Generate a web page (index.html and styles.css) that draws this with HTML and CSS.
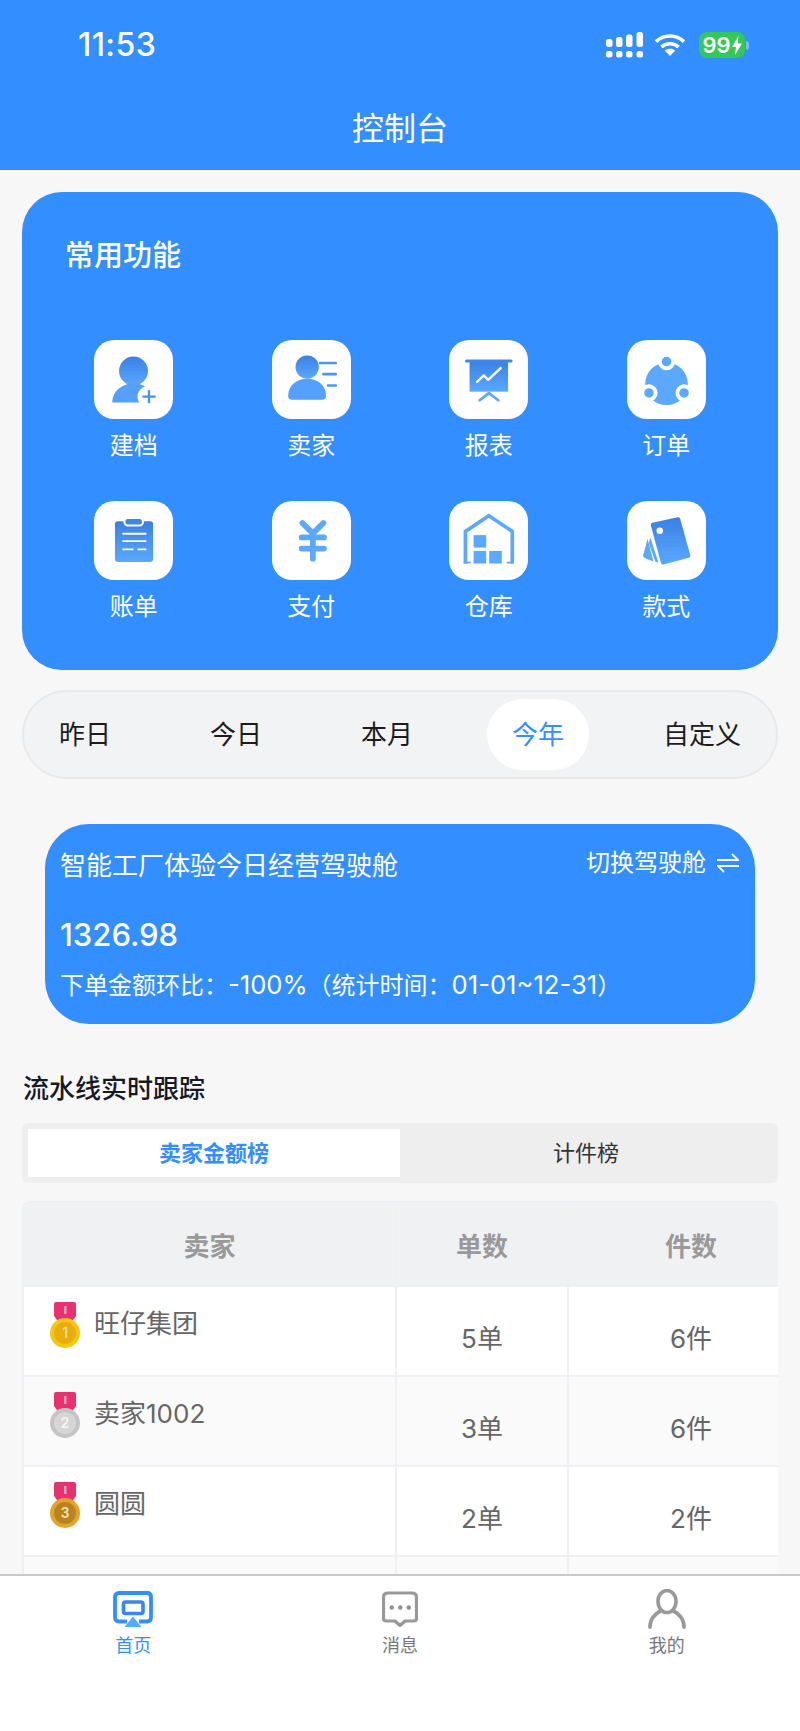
FILE: index.html
```html
<!DOCTYPE html>
<html lang="zh-CN">
<head>
<meta charset="utf-8">
<title>控制台</title>
<link rel="stylesheet" href="styles.css">
</head>
<body>
<svg class="defs" aria-hidden="true"><defs>
<linearGradient id="g" x1="0" y1="0" x2="0" y2="1"><stop offset="0" stop-color="#3a80e2"/><stop offset="1" stop-color="#5aa8ff"/></linearGradient>
</defs></svg>
<div class="app">
  <header class="top">
    <div class="status">
      <span class="time">11:53</span>
      <div class="status-icons">
        <svg class="signal" viewBox="0 0 37 26" width="37" height="26"><g fill="#fff"><rect x="0" y="7" width="6.5" height="8" rx="2.5"/><rect x="10" y="5" width="6.5" height="10" rx="2.5"/><rect x="20" y="2.5" width="6.5" height="12.5" rx="2.5"/><rect x="30.5" y="0" width="6.5" height="15" rx="2.5"/><rect x="0" y="19" width="6.5" height="6.5" rx="2.5"/><rect x="10" y="19" width="6.5" height="6.5" rx="2.5"/><rect x="20" y="19" width="6.5" height="6.5" rx="2.5"/><rect x="30.5" y="19" width="6.5" height="6.5" rx="2.5"/></g></svg>
        <svg class="wifi" viewBox="0 0 32 23" width="32" height="23"><g fill="none" stroke="#fff" stroke-width="3.6"><path d="M2 8.6C9.8 1.2 22.2 1.2 30 8.6"/><path d="M7.4 14C12 9.6 20 9.6 24.6 14"/></g><path d="M16 23l-5.2-5.4c2.9-2.6 7.5-2.6 10.4 0z" fill="#fff"/></svg>
        <div class="battery">
          <div class="batt-body"><span>99</span><svg viewBox="0 0 10 19" width="10" height="19"><path d="M6.4 0L0 11h4L3 19l7-11.6H5.8z" fill="#fff"/></svg></div>
          <i class="batt-nub"></i>
        </div>
      </div>
    </div>
    <h1 class="title">控制台</h1>
  </header>

  <main class="main">
    <section class="func-card">
      <h2 class="func-title">常用功能</h2>
      <div class="func-grid">
        <div class="func">
          <div class="tile"><svg viewBox="0 0 78 78" width="79" height="79">
            <circle cx="39" cy="30.7" r="14.3" fill="url(#g)"/>
            <path d="M18 61.7C18 51 27 43 39 43s21 8 21 18.700z" fill="#559fff"/>
            <circle cx="53.500" cy="56" r="10.500" fill="#fff"/>
            <path d="M54.300 49.500v13M47.800 56h13" stroke="#4490f4" stroke-width="2.200" fill="none"/>
          </svg></div>
          <span class="func-label">建档</span>
        </div>
        <div class="func">
          <div class="tile"><svg viewBox="0 0 78 78" width="79" height="79">
            <circle cx="34.700" cy="26.700" r="11.500" fill="url(#g)"/>
            <path d="M16 55C16 45 24 38.300 34.700 38.300S53.300 45 53.300 55q0 4-4 4H20q-4 0-4-4z" fill="#559fff"/>
            <path d="M47.300 22.700H63M50.700 33.700H63M55.300 45H63" stroke="#4a94f5" stroke-width="2.500" stroke-linecap="round" fill="none"/>
          </svg></div>
          <span class="func-label">卖家</span>
        </div>
        <div class="func">
          <div class="tile"><svg viewBox="0 0 78 78" width="79" height="79">
            <rect x="20.300" y="20.700" width="38" height="30.300" fill="url(#g)"/>
            <path d="M17.300 20.700h44" stroke="#3d86ea" stroke-width="3" stroke-linecap="round"/>
            <path d="M27.700 41.300L34.300 35l4.400 4.300L51 27.700" stroke="#fff" stroke-width="2.400" stroke-linecap="round" stroke-linejoin="round" fill="none"/>
            <path d="M39.300 52.500l-9 7M39.300 52.500l9.400 7" stroke="#5aa8ff" stroke-width="2.700" stroke-linecap="round" fill="none"/>
          </svg></div>
          <span class="func-label">报表</span>
        </div>
        <div class="func">
          <div class="tile"><svg viewBox="0 0 78 78" width="79" height="79">
            <circle cx="39" cy="43.300" r="21" fill="#5aa8ff"/>
            <g fill="#5aa8ff" stroke="#fff" stroke-width="3.800"><circle cx="39" cy="21.300" r="6.600"/><circle cx="21.700" cy="52.300" r="6.600"/><circle cx="56.300" cy="52.300" r="6.600"/></g>
          </svg></div>
          <span class="func-label">订单</span>
        </div>
        <div class="func">
          <div class="tile"><svg viewBox="0 0 78 78" width="79" height="79">
            <rect x="20.700" y="20" width="37.600" height="40.300" rx="3" fill="url(#g)"/>
            <rect x="30" y="16.700" width="18.300" height="7.600" rx="3.500" fill="#3d86ea" stroke="#fff" stroke-width="2"/>
            <path d="M28 32.300h23.700M28 39.700h23.700M28 47.700h11M43 47.700h8.700" stroke="#fff" stroke-width="1.800" fill="none"/>
          </svg></div>
          <span class="func-label">账单</span>
        </div>
        <div class="func">
          <div class="tile"><svg viewBox="0 0 78 78" width="79" height="79">
            <path d="M30 21.700l10.300 10.300L50.700 21.700M29.300 36h22M29.300 47h22M40.300 32v25" stroke="#5aa8ff" stroke-width="5.700" stroke-linecap="round" stroke-linejoin="round" fill="none"/>
          </svg></div>
          <span class="func-label">支付</span>
        </div>
        <div class="func">
          <div class="tile"><svg viewBox="0 0 78 78" width="79" height="79">
            <path d="M16.200 61.700V30L39.300 14.500 62.500 30V61.700" stroke="#5aa8ff" stroke-width="3.600" fill="none"/>
            <path d="M14.500 60.800h7M57 60.800h7" stroke="#5aa8ff" stroke-width="1.800"/>
            <g fill="#5aa8ff"><rect x="24.300" y="33.700" width="12.400" height="12.300"/><rect x="24.300" y="49.300" width="12.400" height="12.400"/><rect x="39.700" y="49.300" width="12.400" height="12.400"/></g>
          </svg></div>
          <span class="func-label">仓库</span>
        </div>
        <div class="func">
          <div class="tile"><svg viewBox="0 0 78 78" width="79" height="79">
            <path d="M20.300 37.300L16 53.500q-.500 2 1.500 2.800L26 59.800z" fill="#5aa8ff"/>
            <path d="M23 36l-1.500 5.500 6.500 18.500 3 .8z" fill="#5aa8ff"/>
            <path d="M25 21.500L50 16q2-.4 2.500 1.500l10 36q.5 2-1.500 2.500L36 62.600q-2 .4-2.500-1.500L23.500 24q-.5-2 1.500-2.500z" fill="url(#g)"/>
            <circle cx="32.300" cy="29.300" r="3.200" fill="#fff"/>
          </svg></div>
          <span class="func-label">款式</span>
        </div>
      </div>
    </section>

    <nav class="range">
      <span class="range-item">昨日</span>
      <span class="range-item">今日</span>
      <span class="range-item">本月</span>
      <span class="range-item range-on">今年</span>
      <span class="range-item">自定义</span>
    </nav>

    <section class="cockpit">
      <div class="cockpit-head">
        <span class="cockpit-name">智能工厂体验今日经营驾驶舱</span>
        <span class="cockpit-switch">切换驾驶舱
          <svg viewBox="0 0 22 20" width="22" height="20"><path d="M0 7h21l-6-6M22 13H1l6 6" stroke="#fff" stroke-width="1.800" fill="none"/></svg>
        </span>
      </div>
      <div class="cockpit-num">1326.98</div>
      <div class="cockpit-sub">下单金额环比：<span class="latin">-100%</span>（统计时间：<span class="latin">01-01~12-31</span>）</div>
    </section>

    <h3 class="sec-title">流水线实时跟踪</h3>
    <div class="tabs">
      <div class="tab tab-on">卖家金额榜</div>
      <div class="tab">计件榜</div>
    </div>

    <div class="table">
      <div class="tr thead">
        <div class="td">卖家</div><div class="td">单数</div><div class="td">件数</div>
      </div>
      <div class="tr">
        <div class="td td-name">
          <svg class="medal" viewBox="0 0 30 46" width="30" height="46"><path d="M4 2q0-2 2-2h18q2 0 2 2v12l-6 8H10L4 14z" fill="#e8316f"/><rect x="14" y="4" width="2.500" height="8" fill="#f7a0bd"/><circle cx="15" cy="31" r="15" fill="#f3c80f"/><circle cx="15" cy="31" r="11" fill="#e8ae10"/><text x="15" y="36" class="medal-num" fill="#f8dc80">1</text></svg>
          <span>旺仔集团</span>
        </div>
        <div class="td td-num">5单</div><div class="td td-num">6件</div>
      </div>
      <div class="tr tr-alt">
        <div class="td td-name">
          <svg class="medal" viewBox="0 0 30 46" width="30" height="46"><path d="M4 2q0-2 2-2h18q2 0 2 2v12l-6 8H10L4 14z" fill="#e8316f"/><rect x="14" y="4" width="2.500" height="8" fill="#f7a0bd"/><circle cx="15" cy="31" r="15" fill="#c4c4c4"/><circle cx="15" cy="31" r="11" fill="#d6d6d6"/><text x="15" y="36" class="medal-num" fill="#f4f4f4">2</text></svg>
          <span>卖家1002</span>
        </div>
        <div class="td td-num">3单</div><div class="td td-num">6件</div>
      </div>
      <div class="tr">
        <div class="td td-name">
          <svg class="medal" viewBox="0 0 30 46" width="30" height="46"><path d="M4 2q0-2 2-2h18q2 0 2 2v12l-6 8H10L4 14z" fill="#e8316f"/><rect x="14" y="4" width="2.500" height="8" fill="#f7a0bd"/><circle cx="15" cy="31" r="15" fill="#e2a52a"/><circle cx="15" cy="31" r="11" fill="#b98420"/><text x="15" y="36" class="medal-num" fill="#f0dcae">3</text></svg>
          <span>圆圆</span>
        </div>
        <div class="td td-num">2单</div><div class="td td-num">2件</div>
      </div>
      <div class="tr tr-alt">
        <div class="td"></div><div class="td"></div><div class="td"></div>
      </div>
    </div>
  </main>

  <footer class="tabbar">
    <div class="bar-item bar-on">
      <div class="bar-icon"><svg viewBox="0 0 40 36" width="40" height="36">
        <path d="M14 30.500H6q-4 0-4-4V6q0-4 4-4h28q4 0 4 4v20.500q0 4-4 4h-8" stroke="#338eff" stroke-width="3.800" fill="none"/>
        <rect x="10.500" y="11" width="19.500" height="11.500" rx="2" stroke="#3a86ec" stroke-width="3.600" fill="none"/>
        <path d="M20 25.500l8.500 10.500h-17z" fill="#5aa8ff"/>
      </svg></div>
      <span>首页</span>
    </div>
    <div class="bar-item">
      <div class="bar-icon"><svg viewBox="0 0 36 36" width="36" height="36">
        <path d="M6 2h24q4.500 0 4.500 4.500v21q0 2.500-3 2.500H23l-5 4.500-5-4.500H4.500q-3 0-3-2.500v-21Q1.500 2 6 2z" stroke="#999" stroke-width="3.200" stroke-linejoin="round" fill="none"/>
        <g fill="#8f8f8f"><circle cx="9.800" cy="16.500" r="2.200"/><circle cx="18.300" cy="16.500" r="2.200"/><circle cx="26.800" cy="16.500" r="2.200"/></g>
      </svg></div>
      <span>消息</span>
    </div>
    <div class="bar-item">
      <div class="bar-icon"><svg viewBox="0 0 40 40" width="40" height="40">
        <ellipse cx="20" cy="12.500" rx="9" ry="11" stroke="#999" stroke-width="3.600" fill="none"/>
        <path d="M3 38C3 30 8.500 24.500 13.500 22M37 38C37 30 31.500 24.500 26.500 22" stroke="#999" stroke-width="3.800" stroke-linecap="round" fill="none"/>
      </svg></div>
      <span>我的</span>
    </div>
  </footer>
</div>
</body>
</html>
```

FILE: styles.css
```css
* { box-sizing: border-box; }
html, body { margin: 0; padding: 0; }
body {
  width: 800px;
  height: 1731px;
  overflow: hidden;
  font-family: "Inter", "Noto Sans CJK SC", sans-serif;
  background: #f7f7f7;
  color: #222;
}
.defs { width: 0; height: 0; display: block; overflow: hidden; }
.app { display: flex; flex-direction: column; height: 1731px; }
svg { display: block; flex: none; }

/* header */
.top { height: 170px; flex: none; background: #338eff; color: #fff; }
.status {
  height: 90px;
  display: flex;
  align-items: center;
  justify-content: space-between;
  padding: 0 51px 0 78px;
}
.time { font-size: 32px; font-weight: 500; line-height: 1; letter-spacing: .4px; }
.status-icons { display: flex; align-items: center; }
.signal { margin-right: 11px; margin-top: -1px; }
.wifi { margin-right: 13px; margin-top: -1px; }
.battery { display: flex; align-items: center; }
.batt-body {
  width: 46px;
  height: 26px;
  background: #34c759;
  border-radius: 8px;
  display: flex;
  align-items: center;
  justify-content: center;
  gap: 1px;
  color: #fff;
  font-size: 22px;
  font-weight: 600;
  line-height: 26px;
}
.batt-nub { width: 3px; height: 9px; margin-left: 1px; border-radius: 0 3px 3px 0; background: #7fb8ff; }
.title {
  margin: 0;
  height: 80px;
  font-size: 32px;
  font-weight: 400;
  line-height: 78px;
  text-align: center;
}

/* main */
.main { flex: 1; min-height: 0; overflow: hidden; padding: 22px 22px 0; }

.func-card {
  background: #338eff;
  border-radius: 40px;
  height: 478px;
  padding: 44px 23px 0;
  color: #fff;
}
.func-title {
  margin: 0 0 64px 20px;
  font-size: 29px;
  font-weight: 500;
  line-height: 40px;
}
.func-grid { display: grid; grid-template-columns: repeat(4, 1fr); row-gap: 38px; }
.func { display: flex; flex-direction: column; align-items: center; }
.tile {
  width: 79px;
  height: 79px;
  background: #fff;
  border-radius: 20px;
  overflow: hidden;
}
.func-label { margin-top: 10px; font-size: 24px; line-height: 34px; }

.range {
  margin-top: 20px;
  height: 89px;
  background: #f2f3f5;
  border: 2px solid #e8e9eb;
  border-radius: 45px;
  padding: 0 10px;
  display: flex;
  align-items: center;
  justify-content: space-between;
}
.range-item {
  padding: 0 25px;
  height: 71px;
  font-size: 26px;
  line-height: 71px;
  color: #1c1c1c;
  border-radius: 36px;
}
.range-on { background: #fff; color: #338eff; }

.cockpit {
  margin: 45px 23px 0;
  height: 200px;
  background: #338eff;
  border-radius: 44px;
  padding: 24px 16px 0 15px;
  color: #fff;
}
.cockpit-head { display: flex; justify-content: space-between; align-items: flex-start; }
.cockpit-name { font-size: 26px; line-height: 36px; }
.cockpit-switch {
  display: flex;
  align-items: center;
  gap: 11px;
  font-size: 24px;
  line-height: 30px;
}
.cockpit-num { margin-top: 31px; font-size: 31px; font-weight: 500; line-height: 40px; }
.cockpit-sub { margin-top: 13px; font-size: 24px; line-height: 34px; white-space: nowrap; }
.latin { font-size: 25.600px; }

.sec-title {
  margin: 47px 0 0 1px;
  font-size: 26px;
  font-weight: 500;
  line-height: 36px;
  color: #151a26;
}
.tabs {
  margin-top: 16px;
  height: 60px;
  background: #eeeeee;
  border-radius: 6px;
  padding: 6px;
  display: flex;
}
.tab {
  flex: 1;
  font-size: 22px;
  line-height: 48px;
  text-align: center;
  color: #333;
}
.tab-on {
  flex: none;
  width: 372px;
  background: #fff;
  color: #338eff;
  font-weight: 700;
}

.table {
  margin-top: 18px;
  border: solid #eef0f6;
  border-width: 2px 0 0 2px;
  border-radius: 8px 8px 0 0;
  overflow: hidden;
}
.tr {
  display: grid;
  grid-template-columns: 373px 172px 244px;
  height: 90px;
  background: #fff;
  border-bottom: 2px solid #eef0f6;
}
.tr-alt { background: #fafafa; }
.thead { height: 84px; background: #f0f1f2; }
.td {
  border-right: 2px solid #eef0f6;
  font-size: 26px;
  color: #666;
  display: flex;
  align-items: center;
  justify-content: center;
}
.td:last-child { border-right: 0; }
.thead .td { font-weight: 700; color: #999; }
.td-name {
  justify-content: flex-start;
  align-items: flex-start;
  padding: 14px 0 0 26px;
  gap: 14px;
  line-height: 46px;
}
.td-num { padding-top: 10px; }
.medal { filter: blur(.6px); margin-top: 1px; }
.medal-num { font-size: 14px; font-weight: 700; text-anchor: middle; }

/* tab bar */
.tabbar {
  flex: none;
  height: 157px;
  background: #fff;
  border-top: 2px solid #c9c9c9;
  display: grid;
  grid-template-columns: repeat(3, 1fr);
  padding-top: 13px;
}
.bar-item {
  display: flex;
  flex-direction: column;
  align-items: center;
  font-size: 18px;
  line-height: 26px;
  color: #777;
}
.bar-on { color: #338eff; }
.bar-icon { height: 40px; display: flex; align-items: center; margin-bottom: 4px; }
```
